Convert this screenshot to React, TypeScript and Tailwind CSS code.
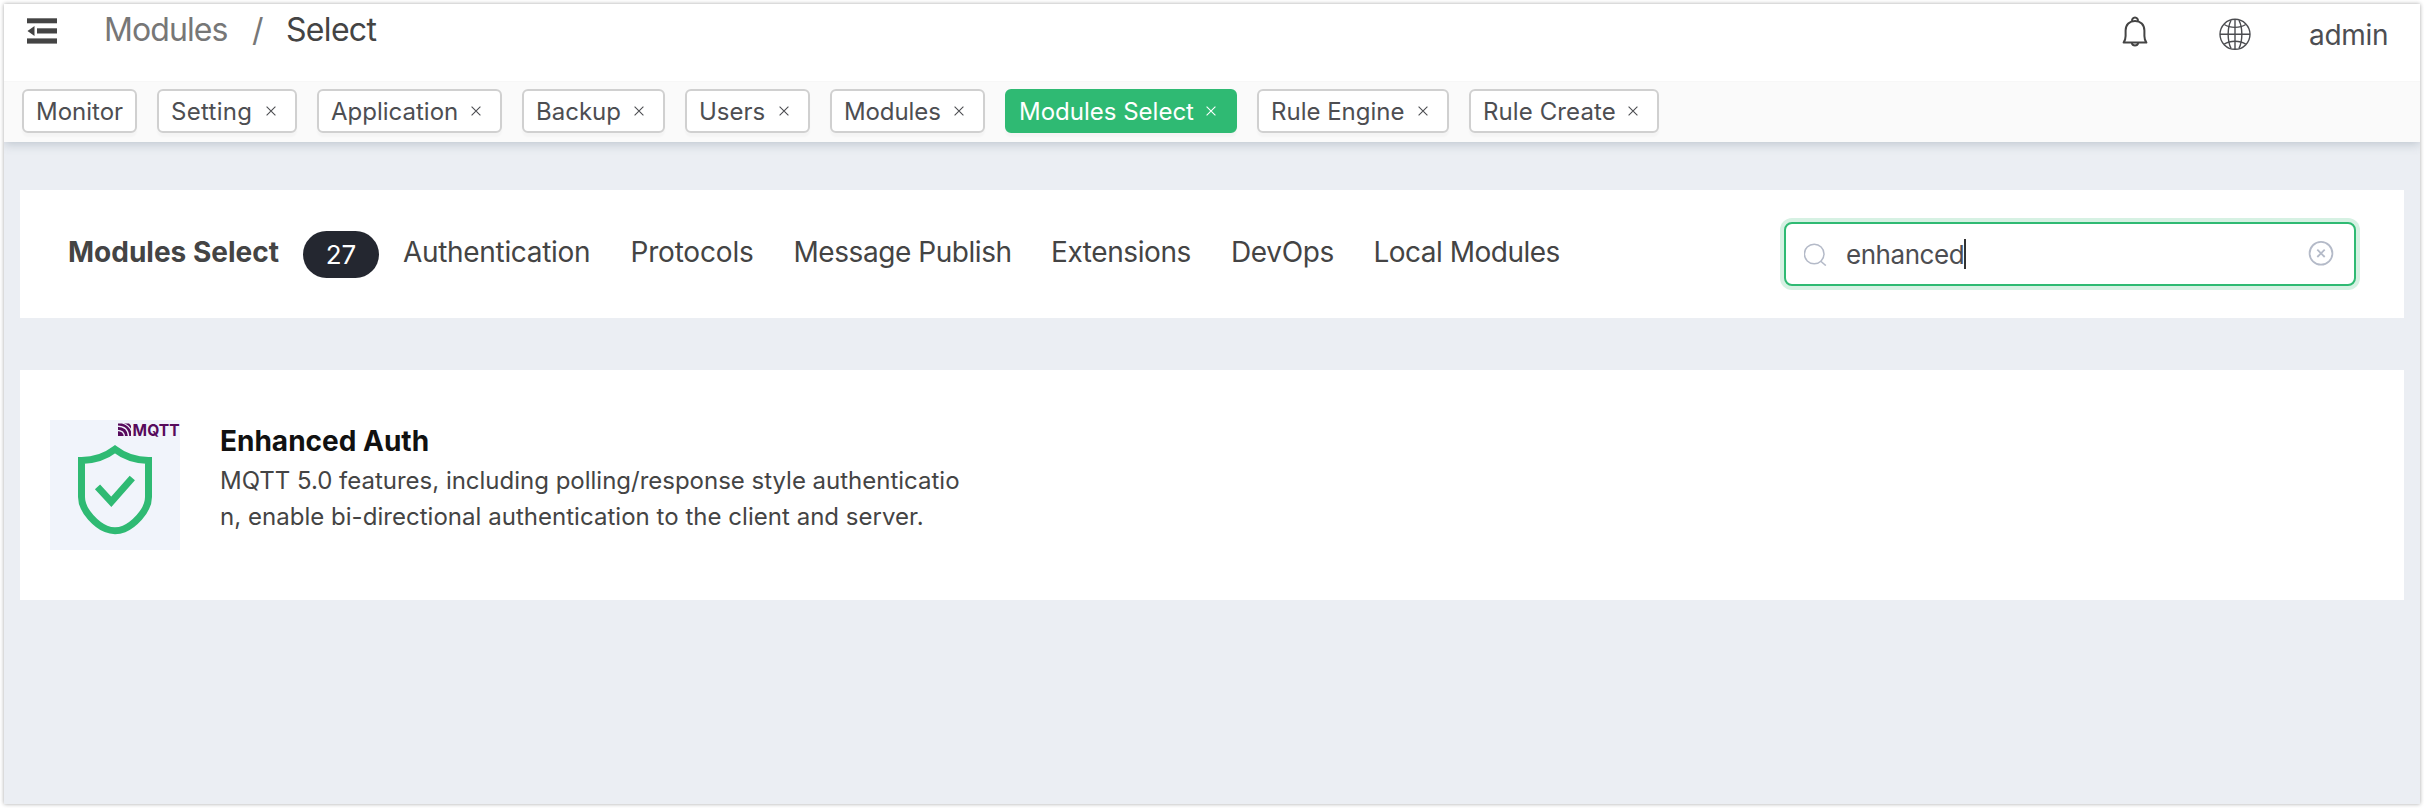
import React from 'react';

type Tab = { label: string; width: string; closable: boolean; active?: boolean };

const tabs: Tab[] = [
  { label: 'Monitor', width: 'w-[115px]', closable: false },
  { label: 'Setting', width: 'w-[140px] tracking-[0.3px]', closable: true },
  { label: 'Application', width: 'w-[185px]', closable: true },
  { label: 'Backup', width: 'w-[143px]', closable: true },
  { label: 'Users', width: 'w-[125px]', closable: true },
  { label: 'Modules', width: 'w-[155px] tracking-[-0.1px]', closable: true },
  { label: 'Modules Select', width: 'w-[232px]', closable: true, active: true },
  { label: 'Rule Engine', width: 'w-[192px]', closable: true },
  { label: 'Rule Create', width: 'w-[190px] tracking-[0.1px]', closable: true },
];

const categories: { label: string; className: string }[] = [
  { label: 'Authentication', className: 'w-[227.5px] tracking-[-0.32px]' },
  { label: 'Protocols', className: 'w-[163px] tracking-[-0.19px]' },
  { label: 'Message Publish', className: 'w-[257.5px] tracking-[-0.44px]' },
  { label: 'Extensions', className: 'w-[180px] tracking-[-0.42px]' },
  { label: 'DevOps', className: 'w-[142.5px] tracking-[-0.35px]' },
  { label: 'Local Modules', className: 'tracking-[-0.51px]' },
];

function FoldIcon() {
  return (
    <svg className="h-[26px] w-[30px]" viewBox="0 0 30 26" fill="#444">
      <rect x="0" y="0.3" width="30" height="5" />
      <rect x="10" y="10.3" width="20" height="5.2" />
      <rect x="0" y="20.4" width="30" height="5.2" />
      <path d="M0.5 13 L7.5 8 V18 Z" />
    </svg>
  );
}

function BellIcon() {
  return (
    <svg className="mt-3 h-8 w-[26px]" viewBox="0 0 26 32" fill="none" stroke="#444" strokeWidth="2">
      <path d="M10.2 5.2 A2.9 2.9 0 1 1 15.8 5.2" />
      <path d="M1.6 26.6 C3 24.6 3.6 23 3.6 20 V14.6 C3.6 8.6 7.6 4.9 13 4.9 S22.4 8.6 22.4 14.6 V20 C22.4 23 23 24.6 24.4 26.6 Z" strokeLinejoin="round" />
      <path d="M9.8 27 A3.3 3.3 0 0 0 16.2 27" />
    </svg>
  );
}

function GlobeIcon() {
  return (
    <svg className="mt-[18px] h-8 w-8" viewBox="0 0 32 32" fill="none" stroke="#4b4c50" strokeWidth="1.4">
      <circle cx="16" cy="16.3" r="15" />
      <path d="M1 16.3 H31 M16 1.3 V31.3" />
      <path d="M12 2.2 C8.2 10 8.2 22.6 12 30.4 M20 2.2 C23.8 10 23.8 22.6 20 30.4" />
      <path d="M5.3 6.5 C11 10.3 21 10.3 26.7 6.5 M5.3 26.1 C11 22.3 21 22.3 26.7 26.1" />
    </svg>
  );
}

function CloseIcon() {
  return (
    <svg className="h-2.5 w-2.5" viewBox="0 0 10 10" fill="none" stroke="currentColor" strokeWidth="1.1">
      <path d="M0.6 0.6 L9.4 9.4 M9.4 0.6 L0.6 9.4" />
    </svg>
  );
}

function ShieldLogo() {
  return (
    <svg className="h-[130px] w-[130px] bg-[#f1f4fb]" viewBox="0 0 130 130">
      <g fill="none" stroke="#2fba73" strokeWidth="7">
        <path d="M65 29.3 C55 37 44 40.5 31.5 40.5 V77 C31.5 92 48 105.5 56 108.9 C62 111.3 68 111.3 74 108.9 C82 105.5 98.5 92 98.5 77 V40.5 C86 40.5 75 37 65 29.3 Z" />
        <path d="M47.5 66.8 L61.3 81.8 L82.3 58" />
      </g>
      <g>
        <path d="M68 3.5 H79 L81 5.500 V16 H68 Z" fill="#570a5c" />
        <path d="M67 6.2 C75 6.2 78.5 10.5 78.7 17 M67 10.3 C72 10.3 74.4 13 74.5 17 M72.5 3 C77 4.5 80 7.2 81.5 11" fill="none" stroke="#f1f4fb" strokeWidth="1.3" />
      </g>
      <text x="82.6" y="16" fill="#570a5c" fontFamily="Inter, sans-serif" fontWeight="700" fontSize="16.5" textLength="47" lengthAdjust="spacingAndGlyphs">MQTT</text>
    </svg>
  );
}

export default function App() {
  return (
    <div className="h-[808px] w-[2424px] bg-white p-1 font-['Inter',sans-serif] text-[#444]">
      <div className="flex h-[800px] flex-col bg-[#ebeef3] shadow-[0_0_4px_rgba(0,0,0,0.35)]">
        <header className="flex h-[77px] shrink-0 items-start bg-white pl-[23px]">
          <div className="pt-3.5">
            <FoldIcon />
          </div>
          <nav className="ml-[47px] flex pt-1.5 text-[32px] leading-10">
            <span className="w-[148px] tracking-[-0.92px] text-[#777]">Modules</span>
            <span className="w-[34px] text-[#777]">/</span>
            <span className="tracking-[-0.68px]">Select</span>
          </nav>
          <div className="ml-auto flex items-start">
            <BellIcon />
            <div className="w-[71px]" />
            <div className="-mt-1">
              <GlobeIcon />
            </div>
            <span className="ml-[58px] w-[111px] pt-[11px] text-[28px] leading-10 tracking-[-0.3px] text-[#4d4e52]">admin</span>
          </div>
        </header>

        <div className="flex h-[658px] shrink-0 flex-col overflow-hidden">
          <div className="flex h-[61px] shrink-0 items-start gap-5 border-t border-[#f7f7f7] bg-[#fafafa] pl-[18px] pt-[7px] shadow-[0_2px_10px_rgba(80,100,115,0.3)]">
            {tabs.map((tab) => (
              <div
                key={tab.label}
                className={`${tab.width} flex h-11 shrink-0 items-center whitespace-nowrap rounded-md border-2 pl-3 pr-[19px] text-[24px] leading-10 shadow-[0_4px_2px_rgba(0,0,0,0.025)] ${
                  tab.active ? 'border-[#2fba73] bg-[#2fba73] text-white' : 'border-[#d0d0d0] bg-white text-[#4d4e52]'
                }`}
              >
                <span className="pt-px">{tab.label}</span>
                {tab.closable && (
                  <span className="ml-auto">
                    <CloseIcon />
                  </span>
                )}
              </div>
            ))}
          </div>

          <main className="flex flex-col gap-[52px] px-4 pt-12">
            <section className="flex h-32 items-start bg-white px-12">
              <h1 className="w-[235px] whitespace-nowrap pt-[42px] text-[28px] font-bold leading-10">Modules Select</h1>
              <div className="mt-[41px] flex h-[47px] w-[76px] items-center justify-center rounded-[24px] bg-[#242730] text-[26px] leading-10 text-white">
                27
              </div>
              <nav className="ml-6 flex whitespace-nowrap pt-[42px] text-[28px] leading-10">
                {categories.map((category) => (
                  <span key={category.label} className={category.className}>
                    {category.label}
                  </span>
                ))}
              </nav>
              <div className="ml-auto mt-8 flex h-16 w-[572px] items-center rounded-lg border-2 border-[#2fba73] bg-white pl-[18px] pr-5 shadow-[0_0_0_4px_#d6f1e3]">
                <svg className="h-6 w-6" viewBox="0 0 24 24" fill="none" stroke="#b4bac8" strokeWidth="1.5">
                  <circle cx="10.2" cy="12" r="9.8" />
                  <path d="M16.5 19 L21.8 23.6" />
                </svg>
                <span className="ml-[18px] pt-0.5 text-[26px] leading-10 tracking-[-0.45px] text-[#4d4e52]">enhanced</span>
                <span className="h-[30px] w-[2px] bg-[#333]" />
                <svg className="ml-auto h-[26px] w-[26px]" viewBox="0 0 26 26" fill="none" stroke="#b4bac8" strokeWidth="1.8">
                  <circle cx="13" cy="12.3" r="11.4" />
                  <path d="M9.3 8.6 L16.7 16 M16.7 8.6 L9.3 16" />
                </svg>
              </div>
            </section>

            <section className="flex h-[230px] items-start bg-white pl-[30px] pt-[50px]">
              <ShieldLogo />
              <div className="ml-10">
                <h2 className="pb-px text-[28px] font-bold leading-[42px] text-[#111]">Enhanced Auth</h2>
                <p className="whitespace-nowrap text-[24px] leading-9">
                  <span className="block tracking-[-0.01px]">MQTT 5.0 features, including polling/response style authenticatio</span>
                  <span className="block tracking-[0.03px]">n, enable bi-directional authentication to the client and server.</span>
                </p>
              </div>
            </section>
          </main>
        </div>
      </div>
    </div>
  );
}
